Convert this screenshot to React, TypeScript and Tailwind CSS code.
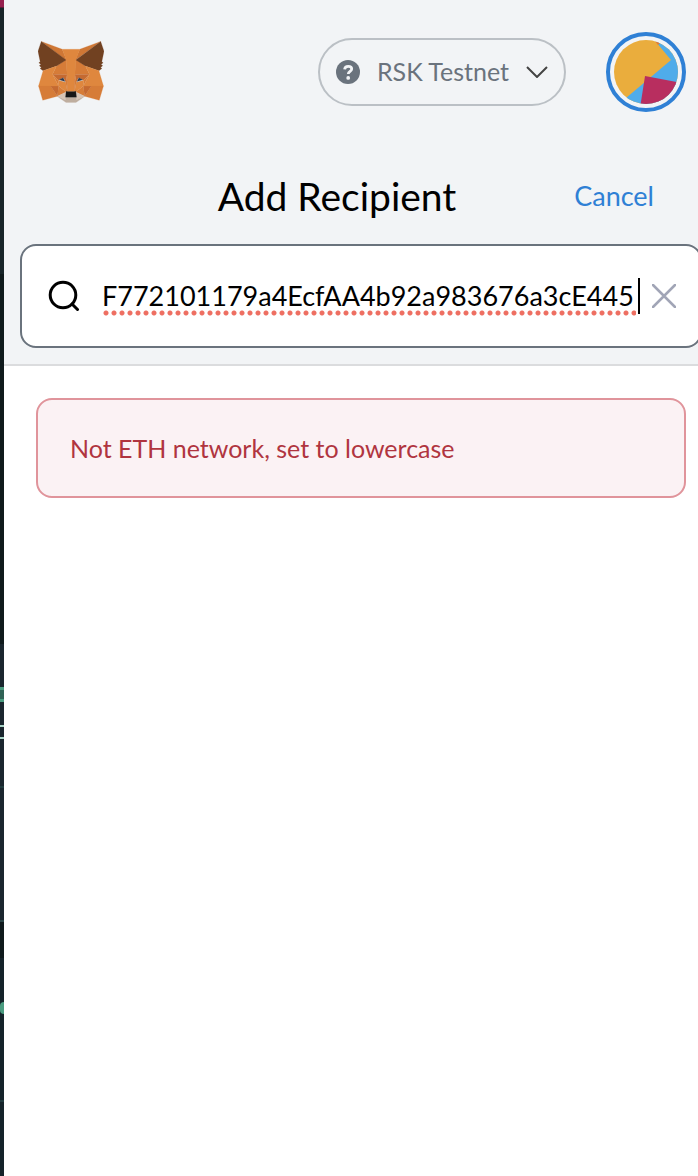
import React from "react";

const foxFacets: [string, string][] = [
  ["#cf7735", "274.1,35.5 174.6,109.4 193,65.8"],
  ["#cf7735", "44.4,35.5 143.1,110.1 125.6,65.8"],
  ["#d67c38", "238.3,206.8 211.8,247.4 268.5,263 284.8,207.7"],
  ["#d67c38", "33.9,207.7 50.1,263 106.8,247.4 80.3,206.8"],
  ["#d67c38", "103.6,131 87.8,162.1 144.1,164.6 142.1,104.1"],
  ["#d67c38", "214.9,131 175.9,103.4 174.6,164.6 230.8,162.1"],
  ["#d67c38", "106.8,247.4 140.6,230.9 111.4,208.1"],
  ["#d67c38", "177.9,230.9 211.8,247.4 207.1,208.1"],
  ["#d7c5b6", "211.8,247.4 177.9,230.9 180.6,253 180.3,262.3"],
  ["#d7c5b6", "106.8,247.4 138.3,262.3 138.1,253 140.6,230.9"],
  ["#c56a31", "106.8,247.4 111.6,206.8 80.3,207.7"],
  ["#c56a31", "207,206.8 211.8,247.4 238.3,207.7"],
  ["#c56a31", "230.8,162.1 174.6,164.6 179.8,193.5 188.1,176.1 208.1,185.2"],
  ["#c56a31", "110.6,185.2 130.6,176.1 138.8,193.5 144.1,164.6 87.8,162.1"],
  ["#d67c38", "87.8,162.1 111.4,208.1 110.6,185.2"],
  ["#d67c38", "208.1,185.2 207.1,208.1 230.8,162.1"],
  ["#df873e", "179.8,193.5 173.1,227.6 177.9,230.9 207.1,208.1 208.1,185.2"],
  ["#df873e", "110.6,185.2 111.4,208.1 140.6,230.9 145.4,227.6 138.8,193.5"],
  ["#2f3b4d", "136,190 114,184 129,176"],
  ["#2f3b4d", "182.6,190 189.6,176 204.6,184"],
  ["#bfae9f", "180.3,262.3 180.6,253 178.1,250.8 140.4,250.8 138.1,253 138.3,262.3 106.8,247.4 117.8,256.4 140.1,271.9 178.4,271.9 200.8,256.4 211.8,247.4"],
  ["#171717", "177.9,228 140.6,228 138.1,250.8 180.6,250.8"],
  ["#714121", "278.3,114.2 286.8,73.4 274.1,35.5 177.9,106.9 214.9,131 267.2,149 278.8,140 273.8,136.4 281.8,129.1 275.6,124.3 283.6,118.2"],
  ["#714121", "31.8,73.4 40.3,114.2 34.9,118.2 42.9,124.3 36.8,129.1 44.8,136.4 39.8,140 51.3,149 103.6,131 140.6,106.9 44.4,35.5"],
  ["#df873e", "267.2,149 214.9,131 230.8,162.1 207.1,208.1 238.3,207.7 284.8,207.7"],
  ["#df873e", "103.6,131 51.3,149 33.9,207.7 80.3,207.7 111.4,208.1 87.8,162.1"],
  ["#df873e", "174.6,164.6 177.9,106.9 193.1,65.8 125.6,65.8 140.6,106.9 144.1,164.6 145.3,182.8 145.4,227.6 173.1,227.6 173.3,182.8"],
  ["#d67c38", "144.1,164.6 138.8,193.5 145.4,227.6 146.9,182.7"],
  ["#d67c38", "174.6,164.6 171.9,182.6 173.1,227.6 179.8,193.5"],
];

function FoxLogo() {
  return (
    <svg viewBox="31.8 35.5 255 236.4" className="h-[62px] w-[66px]" aria-hidden="true">
      {foxFacets.map(([fill, points]) => (
        <polygon key={points} fill={fill} stroke={fill} strokeWidth="0.8" points={points} />
      ))}
    </svg>
  );
}

function Avatar() {
  return (
    <svg viewBox="0 0 64 64" className="size-16" aria-hidden="true">
      <defs>
        <clipPath id="avatar-disc">
          <circle cx="32" cy="32" r="32" />
        </clipPath>
      </defs>
      <g clipPath="url(#avatar-disc)">
        <rect width="64" height="64" fill="#eaad3d" />
        <path d="M42 2 57 20 12 58 20 68H70V-4H42Z" fill="#4facea" />
        <path d="M31 36 68 43V68H26Z" fill="#b82e5f" />
        <path d="M41 1 46 3 44 5Z" fill="#ee7a2c" />
      </g>
    </svg>
  );
}

function NetworkPicker() {
  return (
    <button
      type="button"
      className="flex h-[68px] w-62 items-center rounded-full border-2 border-[#bbc0c5] px-4 text-[25px] leading-8 text-[#6a737d]"
    >
      <svg viewBox="0 0 24 24" className="size-6 shrink-0" aria-hidden="true">
        <circle cx="12" cy="12" r="12" fill="#6a737d" />
        <path
          d="M8.6 9.4C8.8 7.500 10.200 6.300 12.200 6.300c2 0 3.500 1.100 3.500 2.800 0 2.400-3.400 2.300-3.400 5"
          fill="none"
          stroke="#f2f4f6"
          strokeWidth="2.8"
        />
        <circle cx="12.2" cy="17.9" r="1.9" fill="#f2f4f6" />
      </svg>
      <span className="flex-1 pb-0.5 text-center whitespace-nowrap">RSK Testnet</span>
      <svg viewBox="0 0 22 12" className="h-3 w-[22px] shrink-0" aria-hidden="true">
        <path d="M1 1 11 11 21 1" fill="none" stroke="#444" strokeWidth="2" />
      </svg>
    </button>
  );
}

function BackdropStrip() {
  return (
    <div className="flex w-1 shrink-0 flex-col overflow-hidden bg-[#15232a]" aria-hidden="true">
      <div className="h-2 shrink-0 border-b border-[#5c1b37] bg-[#96204f]" />
      <div className="h-[266px] shrink-0 bg-[#182529]" />
      <div className="h-[370px] shrink-0 bg-[#0f1a1c]" />
      <div className="h-[43px] shrink-0 bg-[#1a262e]" />
      <div className="h-[15px] shrink-0 border-y-3 border-[#4a9c80] bg-[#2f6255]" />
      <div className="h-[23px] shrink-0 bg-[#1a262e]" />
      <div className="h-[14px] shrink-0 border-y-2 border-[#a7d3c6] bg-[#1a262e]" />
      <div className="h-[49px] shrink-0 border-b-2 border-[#213b3e] bg-[#1a262e]" />
      <div className="h-[134px] shrink-0 border-b-2 border-[#2a4547] bg-[#1a262e]" />
      <div className="h-9 shrink-0 bg-[#0f1a1c]" />
      <div className="h-11 shrink-0 bg-[#15232a]" />
      <div className="h-3 shrink-0 rounded-l-full bg-[#4a9c80]" />
      <div className="h-[88px] shrink-0 border-b-2 border-[#213b3e] bg-[#15232a]" />
    </div>
  );
}

export default function App() {
  return (
    <div className="flex min-h-screen overflow-hidden bg-white font-['Lato','Liberation_Sans',sans-serif]">
      <BackdropStrip />
      <main className="-mr-5 min-w-0 flex-1">
        <div className="border-b-2 border-[#dbdcde] bg-[#f2f4f6] pb-4">
          <header className="flex items-center px-8 pt-8">
            <a href="#home" aria-label="MetaMask home" className="mr-auto ml-0.5">
              <FoxLogo />
            </a>
            <NetworkPicker />
            <button
              type="button"
              aria-label="Account menu"
              className="ml-10 flex size-20 items-center justify-center rounded-full border-4 border-[#2f80d5]"
            >
              <Avatar />
            </button>
          </header>

          <div className="grid h-[132px] grid-cols-[1fr_auto_1fr] items-center px-16 pt-9">
            <h1 className="col-start-2 mr-12 text-[39px] leading-12 text-black">Add Recipient</h1>
            <button type="button" className="justify-self-end text-[27px] leading-8 text-[#2f80d5]">
              Cancel
            </button>
          </div>

          <div className="mx-4 flex h-[104px] items-center rounded-2xl border-2 border-[#6a737d] bg-white px-6">
            <svg viewBox="0 0 32 32" className="ml-0.5 size-8 shrink-0" aria-hidden="true">
              <circle cx="15" cy="15" r="12.8" fill="none" stroke="#000" strokeWidth="3" />
              <path d="M24 24 29.5 29.5" stroke="#000" strokeWidth="3" strokeLinecap="round" />
            </svg>
            <div className="relative ml-[22px] h-10 min-w-0 flex-1">
              <input
                type="text"
                aria-label="Recipient address"
                spellCheck={false}
                defaultValue="F772101179a4EcfAA4b92a983676a3cE445"
                className="h-10 w-full bg-transparent text-[27px] leading-10 text-black outline-none"
              />
              <span className="absolute bottom-0 left-0 h-1.5 w-[534px] bg-[radial-gradient(circle_at_center,#ee6f62_2px,transparent_3px)] bg-[length:8px_6px]" />
              <span className="absolute top-0.5 right-0 h-9 w-0.5 bg-black" />
            </div>
            <button type="button" aria-label="Clear" className="ml-3 shrink-0">
              <svg viewBox="0 0 24 24" className="size-6" aria-hidden="true">
                <path d="M1 1 23 23M23 1 1 23" stroke="#a1a5b6" strokeWidth="2.5" strokeLinecap="round" />
              </svg>
            </button>
          </div>
        </div>

        <div
          role="alert"
          className="mx-8 mt-8 rounded-2xl border-2 border-[#e0949b] bg-[#fbf2f4] p-8 text-[25px] leading-8 text-[#b0353f]"
        >
          Not ETH network, set to lowercase
        </div>
      </main>
    </div>
  );
}
